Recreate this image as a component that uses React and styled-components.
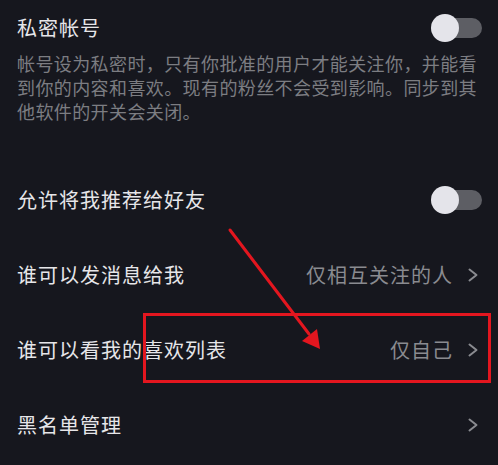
import styled, { createGlobalStyle } from 'styled-components'

const GlobalStyle = createGlobalStyle`
    html, body {
        margin: 0;
        padding: 0;
        background: #16171e;
    }

    body {
        font-family: "Noto Sans CJK SC", "Noto Sans", sans-serif;
    }
`;

const Page = styled.div`
    position: relative;
    width: 498px;
    height: 465px;
    overflow: hidden;
    background: #16171e;
    padding: 0 16px 0 17px;
    box-sizing: border-box;
`;

const Intro = styled.div`
    padding-top: 14px;
    height: 162px;
    box-sizing: border-box;

    .head {
        display: flex;
        align-items: center;
        justify-content: space-between;
        height: 28px;
    }

    .desc {
        margin-top: 9px;
        font-size: 18px;
        line-height: 24px;
        letter-spacing: 0.4px;
        color: #7c7d82;
    }
`;

const Label = styled.div`
    font-size: 20px;
    line-height: 28px;
    letter-spacing: 1px;
    color: #e6e6e9;
`;

const Row = styled.div`
    display: flex;
    align-items: center;
    justify-content: space-between;
    height: 75px;
`;

const Value = styled.div`
    display: flex;
    align-items: center;
    gap: 15px;
    font-size: 20px;
    line-height: 28px;
    letter-spacing: 1px;
    color: #8a8b90;

    svg {
        margin-right: 4px;
    }
`;

const Toggle = styled.div`
    position: relative;
    width: 51px;
    height: 28px;
    flex-shrink: 0;

    &::before {
        content: "";
        position: absolute;
        left: 4px;
        right: 0;
        top: 4px;
        height: 20px;
        border-radius: 10px;
        background: #5d5e64;
    }

    &::after {
        content: "";
        position: absolute;
        left: 0;
        top: 0;
        width: 28px;
        height: 28px;
        border-radius: 50%;
        background: #e4e4ea;
    }
`;

const Highlight = styled.div`
    position: absolute;
    left: 143px;
    top: 313px;
    width: 348px;
    height: 70px;
    border: 3px solid #e3161f;
    box-sizing: border-box;
    pointer-events: none;
`;

const Annotation = styled.svg`
    position: absolute;
    left: 0;
    top: 0;
    pointer-events: none;
`;

const Chevron = () => (
    <svg width="10" height="14" viewBox="0 0 10 14">
        <path d="M1.5 1.5 L8.5 7 L1.5 12.5" fill="none" stroke="#8a8b90" strokeWidth="2" strokeLinecap="round" strokeLinejoin="round" />
    </svg>
);

export default () => {
    const rows = [
        { label: "谁可以发消息给我", value: "仅相互关注的人" },
        { label: "谁可以看我的喜欢列表", value: "仅自己" },
        { label: "黑名单管理", value: "" },
    ];

    return (
        <Page>
            <GlobalStyle />

            <Intro>
                <div className="head">
                    <Label>私密帐号</Label>
                    <Toggle />
                </div>
                <div className="desc">
                    帐号设为私密时，只有你批准的用户才能关注你，并能看到你的内容和喜欢。现有的粉丝不会受到影响。同步到其他软件的开关会关闭。
                </div>
            </Intro>

            <Row>
                <Label>允许将我推荐给好友</Label>
                <Toggle />
            </Row>

            {rows.map(row => (
                <Row key={row.label}>
                    <Label>{row.label}</Label>
                    <Value>
                        {row.value && <span>{row.value}</span>}
                        <Chevron />
                    </Value>
                </Row>
            ))}

            <Highlight />

            <Annotation width="498" height="465" viewBox="0 0 498 465">
                <line x1="230" y1="230" x2="309" y2="334" stroke="#e3161f" strokeWidth="3" strokeLinecap="round" />
                <polygon points="320,349 302,341 317,329" fill="#e3161f" />
            </Annotation>
        </Page>
    )
}
